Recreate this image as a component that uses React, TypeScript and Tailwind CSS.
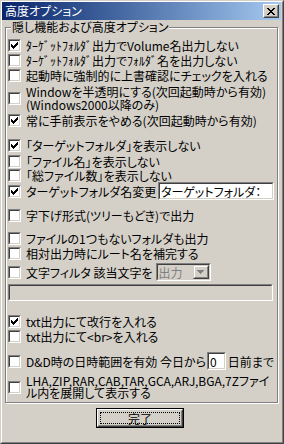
import React from "react";

const font = "font-['Noto_Sans_CJK_JP',sans-serif] [font-feature-settings:'palt']";

function Check({ on }: { on?: boolean }) {
  return (
    <span className="flex h-[13px] w-[13px] shrink-0 border border-t-[#808080] border-l-[#808080] border-r-white border-b-white">
      <span className="flex flex-1 items-center justify-center border border-t-[#404040] border-l-[#404040] border-r-[#d4d0c8] border-b-[#d4d0c8] bg-white">
        {on && (
          <svg width="7" height="7" viewBox="0 0 7 7" shapeRendering="crispEdges">
            <path
              d="M0 2h1v3h-1zM1 3h1v3h-1zM2 4h1v3h-1zM3 3h1v3h-1zM4 2h1v3h-1zM5 1h1v3h-1zM6 0h1v3h-1z"
              fill="#000"
            />
          </svg>
        )}
      </span>
    </span>
  );
}

function Row({
  on,
  className,
  children,
}: {
  on?: boolean;
  className: string;
  children: React.ReactNode;
}) {
  return (
    <div className={"flex items-center " + className}>
      <Check on={on} />
      <div className="ml-[5px] whitespace-nowrap leading-[13px]">{children}</div>
    </div>
  );
}

// sunken edit box
function Sunken({ className, children }: { className: string; children?: React.ReactNode }) {
  return (
    <div className={"flex border border-t-[#808080] border-l-[#808080] border-r-white border-b-white " + className}>
      <div className="flex flex-1 items-center border border-t-[#404040] border-l-[#404040] border-r-[#d4d0c8] border-b-[#d4d0c8]">
        {children}
      </div>
    </div>
  );
}

export default function App() {
  return (
    <div
      className={
        "h-[444px] w-[284px] border border-t-[#d4d0c8] border-l-[#d4d0c8] border-r-[#404040] border-b-[#404040] bg-[#d4d0c8] text-[12px] text-black " +
        font
      }
    >
      <div className="flex h-full flex-col border border-t-white border-l-white border-r-[#808080] border-b-[#808080]">
        {/* title bar */}
        <div className="mr-[1px] flex h-[18px] items-center bg-gradient-to-r from-[#0a246a] to-[#a6caf0] pl-[3px] pr-[2px]">
          <span className="leading-[14px] text-white">高度オプション</span>
          <div className="ml-auto flex h-[14px] w-[16px] border border-t-white border-l-white border-r-[#404040] border-b-[#404040]">
            <div className="flex flex-1 items-center justify-center border border-t-[#d4d0c8] border-l-[#d4d0c8] border-r-[#808080] border-b-[#808080] bg-[#d4d0c8]">
              <svg width="8" height="7" viewBox="0 0 8 7" shapeRendering="crispEdges">
                <path
                  d="M0 0h2v1h-2zM6 0h2v1h-2zM1 1h2v1h-2zM5 1h2v1h-2zM2 2h4v1h-4zM3 3h2v1h-2zM2 4h4v1h-4zM1 5h2v1h-2zM5 5h2v1h-2zM0 6h2v1h-2zM6 6h2v1h-2z"
                  fill="#000"
                />
              </svg>
            </div>
          </div>
        </div>

        {/* group box */}
        <div className="relative ml-[3px] mt-[7px] h-[376px] w-[273px] border border-[#808080] pl-[2px] pr-[3px] pt-[10px] shadow-[inset_1px_1px_0_#fff,1px_1px_0_#fff]">
          <div className="absolute left-[5px] top-[-8px] bg-[#d4d0c8] px-[1px] leading-[14px]">
            隠し機能および高度オプション
          </div>

          <Row on className="h-[14px]">ﾀｰｹﾞｯﾄﾌｫﾙﾀﾞ出力でVolume名出力しない</Row>
          <Row className="mt-[1px] h-[14px]">ﾀｰｹﾞｯﾄﾌｫﾙﾀﾞ出力でﾌｫﾙﾀﾞ名を出力しない</Row>
          <Row className="mt-[1px] h-[14px]">起動時に強制的に上書確認にチェックを入れる</Row>
          <Row className="mt-[3px] h-[26px]">
            Windowを半透明にする(次回起動時から有効)
            <br />
            (Windows2000以降のみ)
          </Row>
          <Row on className="mt-[2px] h-[14px]">常に手前表示をやめる(次回起動時から有効)</Row>

          <Row on className="mt-[11px] h-[14px]">「ターゲットフォルダ」を表示しない</Row>
          <Row className="mt-[2px] h-[14px]">「ファイル名」を表示しない</Row>
          <Row className="h-[14px]">「総ファイル数」を表示しない</Row>
          <div className="flex h-[18px] items-center">
            <Check on />
            <div className="ml-[5px] whitespace-nowrap leading-[13px]">ターゲットフォルダ名変更</div>
            <div className="ml-auto flex h-[18px] w-[116px] border border-t-[#808080] border-l-[#808080] border-r-white border-b-white">
              <div className="flex flex-1 items-center border border-t-[#404040] border-l-[#404040] border-r-[#d4d0c8] border-b-[#d4d0c8] bg-white pl-[1px] leading-[13px]">
                ターゲットフォルダ：
              </div>
            </div>
          </div>

          <Row className="mt-[8px] h-[14px]">字下げ形式(ツリーもどき)で出力</Row>

          <Row className="mt-[9px] h-[14px]">ファイルの1つもないフォルダも出力</Row>
          <Row className="mt-[1px] h-[14px]">相対出力時にルート名を補完する</Row>
          <div className="mt-[3px] flex h-[18px] items-center">
            <Check />
            <div className="ml-[5px] whitespace-nowrap leading-[13px]">文字フィルタ 該当文字を</div>
            <Sunken className="ml-[3px] h-[18px] w-[55px]">
              <span className="pl-[1px] leading-[13px] text-[#808080]">出力</span>
              <div className="ml-auto flex h-[14px] w-[16px] border border-t-[#d4d0c8] border-l-[#d4d0c8] border-r-[#404040] border-b-[#404040]">
                <div className="flex flex-1 items-center justify-center border border-t-white border-l-white border-r-[#808080] border-b-[#808080]">
                  <svg width="7" height="4" viewBox="0 0 7 4" shapeRendering="crispEdges">
                    <path d="M0 0h7v1h-7zM1 1h5v1h-5zM2 2h3v1h-3zM3 3h1v1h-1z" fill="#808080" />
                  </svg>
                </div>
              </div>
            </Sunken>
          </div>
          <Sunken className="mt-[3px] h-[17px] w-[265px]" />

          <Row on className="mt-[13px] h-[14px]">txt出力にて改行を入れる</Row>
          <Row className="mt-[1px] h-[14px]">txt出力にて&lt;br&gt;を入れる</Row>

          <div className="mt-[9px] flex h-[18px] items-center">
            <Check />
            <div className="ml-[5px] whitespace-nowrap leading-[13px]">D&amp;D時の日時範囲を有効 今日から</div>
            <div className="ml-[1px] flex h-[18px] w-[22px] border border-t-[#808080] border-l-[#808080] border-r-white border-b-white">
              <div className="flex flex-1 items-center border border-t-[#404040] border-l-[#404040] border-r-[#d4d0c8] border-b-[#d4d0c8] bg-white pl-[1px] leading-[13px]">
                0
              </div>
            </div>
            <div className="ml-[2px] whitespace-nowrap leading-[13px]">日前まで</div>
          </div>

          <div className="mt-[5px] flex h-[24px] items-center">
            <Check />
            <div className="ml-[5px] whitespace-nowrap leading-[12px]">
              LHA,ZIP,RAR,CAB,TAR,GCA,ARJ,BGA,7Zファイ
              <br />
              ル内を展開して表示する
            </div>
          </div>
        </div>

        {/* OK button */}
        <div className="mt-[5px] flex justify-center pr-[4px]">
          <div className="flex h-[20px] w-[88px] border border-black">
            <div className="flex flex-1 border border-t-white border-l-white border-r-[#404040] border-b-[#404040]">
              <div className="flex flex-1 items-center justify-center border border-t-[#d4d0c8] border-l-[#d4d0c8] border-r-[#808080] border-b-[#808080] p-[1px]">
                <div className="flex h-full w-full items-center justify-center border border-dotted border-black leading-[13px]">
                  完了
                </div>
              </div>
            </div>
          </div>
        </div>
      </div>
    </div>
  );
}
